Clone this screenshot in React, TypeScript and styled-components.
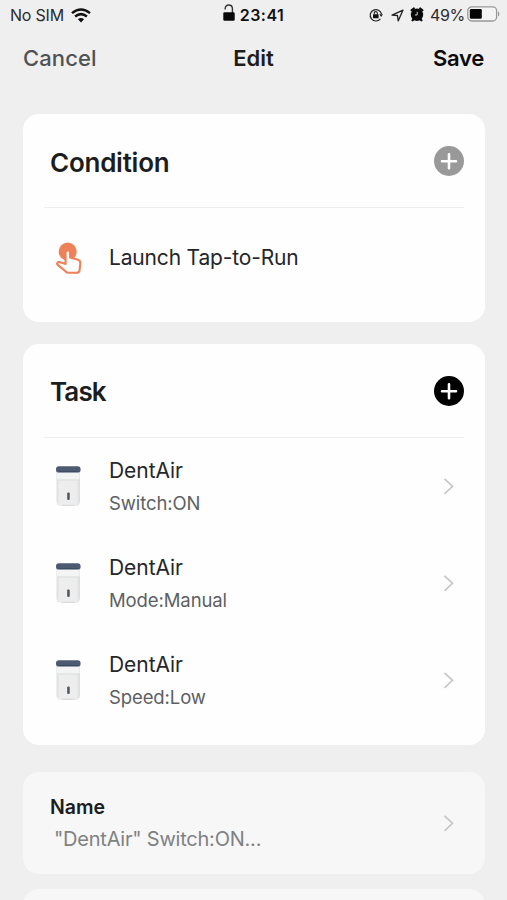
import React from "react";
import styled, { createGlobalStyle } from "styled-components";

const GlobalStyle = createGlobalStyle`
  *, *::before, *::after { box-sizing: border-box; }
  html, body { margin: 0; padding: 0; background: #efefef; }
  body { font-family: Inter, "Liberation Sans", sans-serif; color: #1c1d20; }
`;

const Screen = styled.div`
  width: 507px;
  height: 900px;
  overflow: hidden;
  background: #efefef;
`;

const StatusBar = styled.div`
  display: grid;
  grid-template-columns: 1fr auto 1fr;
  height: 30px;
  align-items: center;
  padding: 0 7px 0 10px;
  color: #151515;
`;

const StatusGroup = styled.div<{ $align?: "start" | "end" }>`
  display: flex;
  align-items: center;
  justify-content: ${(p) => (p.$align === "end" ? "flex-end" : "flex-start")};
  svg { display: block; flex: none; }
`;

const StatusText = styled.span<{ $bold?: boolean; $track: number }>`
  font-size: 16px;
  line-height: 30px;
  font-weight: ${(p) => (p.$bold ? 600 : 400)};
  letter-spacing: ${(p) => p.$track}px;
  color: ${(p) => (p.$bold ? "#111" : "#2b2b2b")};
  white-space: nowrap;
`;

const NavBar = styled.header`
  display: grid;
  grid-template-columns: 1fr auto 1fr;
  align-items: center;
  height: 56px;
  padding: 0 23px;
`;

const NavButton = styled.button<{ $end?: boolean; $color: string; $weight: number; $track: number }>`
  border: 0;
  background: none;
  padding: 0;
  justify-self: ${(p) => (p.$end ? "end" : "start")};
  font: ${(p) => p.$weight} 22px/28px Inter, "Liberation Sans", sans-serif;
  letter-spacing: ${(p) => p.$track}px;
  color: ${(p) => p.$color};
`;

const NavTitle = styled.h1`
  margin: 0 0 1px;
  font-size: 22px;
  line-height: 28px;
  font-weight: 600;
  letter-spacing: 0;
  color: #1c1d20;
`;

const Content = styled.main`
  display: flex;
  flex-direction: column;
  padding: 28px 22px 0 23px;
`;

const Card = styled.section<{ $height: number; $gap: number; $muted?: boolean }>`
  flex: none;
  height: ${(p) => p.$height}px;
  margin-bottom: ${(p) => p.$gap}px;
  border-radius: 16px;
  background: ${(p) => (p.$muted ? "#f7f7f7" : "#fefefe")};
`;

const CardHeader = styled.div`
  display: flex;
  align-items: center;
  justify-content: space-between;
  height: 94px;
  margin: 0 21px;
  padding: 1px 0 0 6px;
  border-bottom: 1px solid #eeeeee;
`;

const CardTitle = styled.h2<{ $track: number }>`
  margin: 3px 0 0;
  font-size: 26px;
  line-height: 32px;
  font-weight: 600;
  letter-spacing: ${(p) => p.$track}px;
`;

const AddButton = styled.button<{ $color: string }>`
  width: 30px;
  height: 30px;
  padding: 0;
  border: 0;
  border-radius: 50%;
  background: ${(p) => p.$color};
  svg { display: block; }
`;

const Row = styled.div<{ $height: number }>`
  display: grid;
  grid-template-columns: 28px 1fr 12px;
  column-gap: 26px;
  align-items: center;
  height: ${(p) => p.$height}px;
  padding: 0 30px 0 32px;
  svg { display: block; }
`;

const RowText = styled.div`
  display: flex;
  flex-direction: column;
  gap: 6px;
  padding-top: 2px;
`;

const Primary = styled.span<{ $track?: number }>`
  font-size: 21px;
  line-height: 26px;
  letter-spacing: ${(p) => p.$track ?? 0}px;
  color: #252629;
`;

const Secondary = styled.span`
  font-size: 18.5px;
  line-height: 26px;
  letter-spacing: -0.1px;
  color: #5d5f62;
`;

const NameRow = styled.div`
  display: flex;
  align-items: center;
  justify-content: space-between;
  height: 102px;
  padding: 0 30px 0 27px;
  svg { display: block; }
`;

const NameLabel = styled.div`
  font-size: 19.5px;
  line-height: 26px;
  font-weight: 600;
`;

const NameValue = styled.div`
  margin-top: 6px;
  padding-left: 4px;
  font-size: 20px;
  line-height: 26px;
  letter-spacing: -0.22px;
  color: #808183;
`;

const WifiIcon = () => (
  <svg width="20" height="15" viewBox="0 0 20 15" fill="none" stroke="#111" strokeWidth="2.5">
    <path d="M1 5.1Q10-2.2 19 5.1" />
    <path d="M4.1 8.5Q10 3.7 15.9 8.5" />
    <path d="M6.9 11.2Q10 8.7 13.1 11.2L10 14.4Z" fill="#111" stroke="none" />
  </svg>
);

const UnlockedIcon = () => (
  <svg width="12" height="18" viewBox="0 0 12 18">
    <path d="M2.2 5.6V4.5C2.2 2.2 3.7 1 5.6 1S9.4 2.200 9.400 4.600V9" fill="none" stroke="#333" strokeWidth="1.4" />
    <rect x="0.3" y="8.3" width="11.4" height="8.5" rx="1.3" fill="#080808" />
  </svg>
);

const RotationLockIcon = () => (
  <svg width="14" height="14" viewBox="0 0 14 14" fill="none" stroke="#222" strokeWidth="1.2">
    <path d="M11.400 10.800A5.700 5.700 0 1 1 12.500 6.200" />
    <path d="M10.300 6.200h3.700l-1.900 2.900Z" fill="#222" stroke="none" />
    <rect x="4" y="6.200" width="5.600" height="4" rx="0.500" fill="#111" stroke="none" />
    <path d="M5.200 6.500V5.200a1.600 1.600 0 0 1 3.200 0v1.300" strokeWidth="1.1" />
  </svg>
);

const LocationIcon = () => (
  <svg width="13" height="13" viewBox="0 0 13 13">
    <path d="M1 6.1L12 1.100L7.200 11.900L6.500 6.500Z" fill="none" stroke="#222" strokeWidth="1.3" strokeLinejoin="round" />
  </svg>
);

const AlarmIcon = () => (
  <svg width="14" height="15" viewBox="0 0 14 15">
    <circle cx="7" cy="7.8" r="6.2" fill="#080808" />
    <path d="M1.600 3.400L3.800 1.500M12.400 3.400L10.200 1.500M2.600 13.300l2-2M11.400 13.300l-2-2" stroke="#080808" strokeWidth="2.2" strokeLinecap="round" />
    <path d="M7.200 4.800V8H4.900" fill="none" stroke="#ccc" strokeWidth="1" />
  </svg>
);

const BatteryIcon = () => (
  <svg width="33" height="16" viewBox="0 0 33 16">
    <rect x="0.8" y="0.8" width="28.8" height="14.2" rx="4" fill="#f4f4f4" stroke="#999" strokeWidth="1.3" />
    <rect x="2.8" y="3" width="12" height="9.8" rx="1.3" fill="#050505" />
    <path d="M31 5.5c1.8.5 1.8 4.3 0 4.8Z" fill="#999" />
  </svg>
);

const PlusIcon = () => (
  <svg width="30" height="30" viewBox="0 0 30 30" stroke="#fff" strokeWidth="2.6" strokeLinecap="round">
    <path d="M15 8.2v14M8 15.2h14" />
  </svg>
);

const Chevron = () => (
  <svg width="12" height="18" viewBox="0 0 12 18" fill="none" stroke="#c6c7c8" strokeWidth="1.7">
    <path d="M1.5 1.8L9.5 9.300L1.5 16.800" />
  </svg>
);

const TapIcon = () => (
  <svg width="28" height="34" viewBox="0 0 28 34">
    <circle cx="12.700" cy="10.600" r="9" fill="#ee8158" />
    <path
      d="M10.600 23V11.600c0-2.900 4.500-2.900 4.500 0v5l7.300 2c2.200.6 3.100 1.600 2.900 3.800l-.7 6.700c-.2 1.800-1.200 2.700-3 2.700h-8.300c-1 0-1.700-.4-2.300-1l-8.200-6.900c-1.500-1.400-.2-3 1.700-2.800Z"
      fill="#fefefe"
      stroke="#ee8158"
      strokeWidth="2.100"
      strokeLinejoin="round"
    />
  </svg>
);

const DeviceIcon = () => (
  <svg width="28" height="42" viewBox="0 0 28 42">
    <defs>
      <linearGradient id="shell" x1="0" x2="1">
        <stop offset="0" stopColor="#dcdede" />
        <stop offset="0.14" stopColor="#eeeeee" />
        <stop offset="0.85" stopColor="#ededed" />
        <stop offset="1" stopColor="#dadcdc" />
      </linearGradient>
    </defs>
    <path d="M1.500 5h23.500v30.500c0 3.700-1.700 5.500-5.200 5.500H6.700c-3.500 0-5.200-1.800-5.200-5.500Z" fill="url(#shell)" />
    <rect x="2" y="7" width="22.500" height="7.500" fill="#f3f4f4" />
    <path d="M2 15h22.500" stroke="#d8dada" strokeWidth="0.900" />
    <rect x="1" y="1.200" width="24.600" height="6.400" rx="2.900" fill="#4d5b72" />
    <path d="M4 6.600h19" stroke="#3a495f" strokeWidth="0.900" />
    <rect x="12.200" y="27.500" width="2.500" height="7.500" rx="1.100" fill="#50555d" />
    <path d="M7 40.300h13" stroke="#d2d4d4" strokeWidth="0.900" />
  </svg>
);

const tasks = ["Switch:ON", "Mode:Manual", "Speed:Low"];

const SimGroup = styled(StatusGroup)`
  gap: 7px;
`;

const ClockGroup = styled(StatusGroup)`
  gap: 5px;
  padding-right: 3px;
  svg { margin-bottom: 4px; }
`;

const IndicatorGroup = styled(StatusGroup)`
  svg:nth-of-type(1) { margin-right: 8px; }
  svg:nth-of-type(2) { margin-right: 6px; }
  svg:nth-of-type(3) { margin: 0 6px 2px 0; }
  svg:nth-of-type(4) { margin: 0 0 2px 2px; }
`;

export default function App() {
  return (
    <>
      <GlobalStyle />
      <Screen>
        <StatusBar>
          <SimGroup>
            <StatusText $track={-0.2}>No SIM</StatusText>
            <WifiIcon />
          </SimGroup>
          <ClockGroup>
            <UnlockedIcon />
            <StatusText $bold $track={0.5}>23:41</StatusText>
          </ClockGroup>
          <IndicatorGroup $align="end">
            <RotationLockIcon />
            <LocationIcon />
            <AlarmIcon />
            <StatusText $track={-0.3}>49%</StatusText>
            <BatteryIcon />
          </IndicatorGroup>
        </StatusBar>
        <NavBar>
          <NavButton $color="#505255" $weight={500} $track={0.1}>Cancel</NavButton>
          <NavTitle>Edit</NavTitle>
          <NavButton $end $color="#0b0b0c" $weight={600} $track={-0.3}>Save</NavButton>
        </NavBar>
        <Content>
          <Card $height={207.5} $gap={22}>
            <CardHeader>
              <CardTitle $track={-0.25}>Condition</CardTitle>
              <AddButton $color="#999999" aria-label="Add condition"><PlusIcon /></AddButton>
            </CardHeader>
            <Row $height={99}>
              <TapIcon />
              <Primary $track={-0.17}>Launch Tap-to-Run</Primary>
            </Row>
          </Card>
          <Card $height={401.5} $gap={27}>
            <CardHeader>
              <CardTitle $track={-0.9}>Task</CardTitle>
              <AddButton $color="#000000" aria-label="Add task"><PlusIcon /></AddButton>
            </CardHeader>
            {tasks.map((action) => (
              <Row key={action} $height={97}>
                <DeviceIcon />
                <RowText>
                  <Primary $track={-0.05}>DentAir</Primary>
                  <Secondary>{action}</Secondary>
                </RowText>
                <Chevron />
              </Row>
            ))}
          </Card>
          <Card $height={102} $gap={15} $muted>
            <NameRow>
              <div>
                <NameLabel>Name</NameLabel>
                <NameValue>"DentAir" Switch:ON...</NameValue>
              </div>
              <Chevron />
            </NameRow>
          </Card>
          <Card $height={60} $gap={0} $muted />
        </Content>
      </Screen>
    </>
  );
}
